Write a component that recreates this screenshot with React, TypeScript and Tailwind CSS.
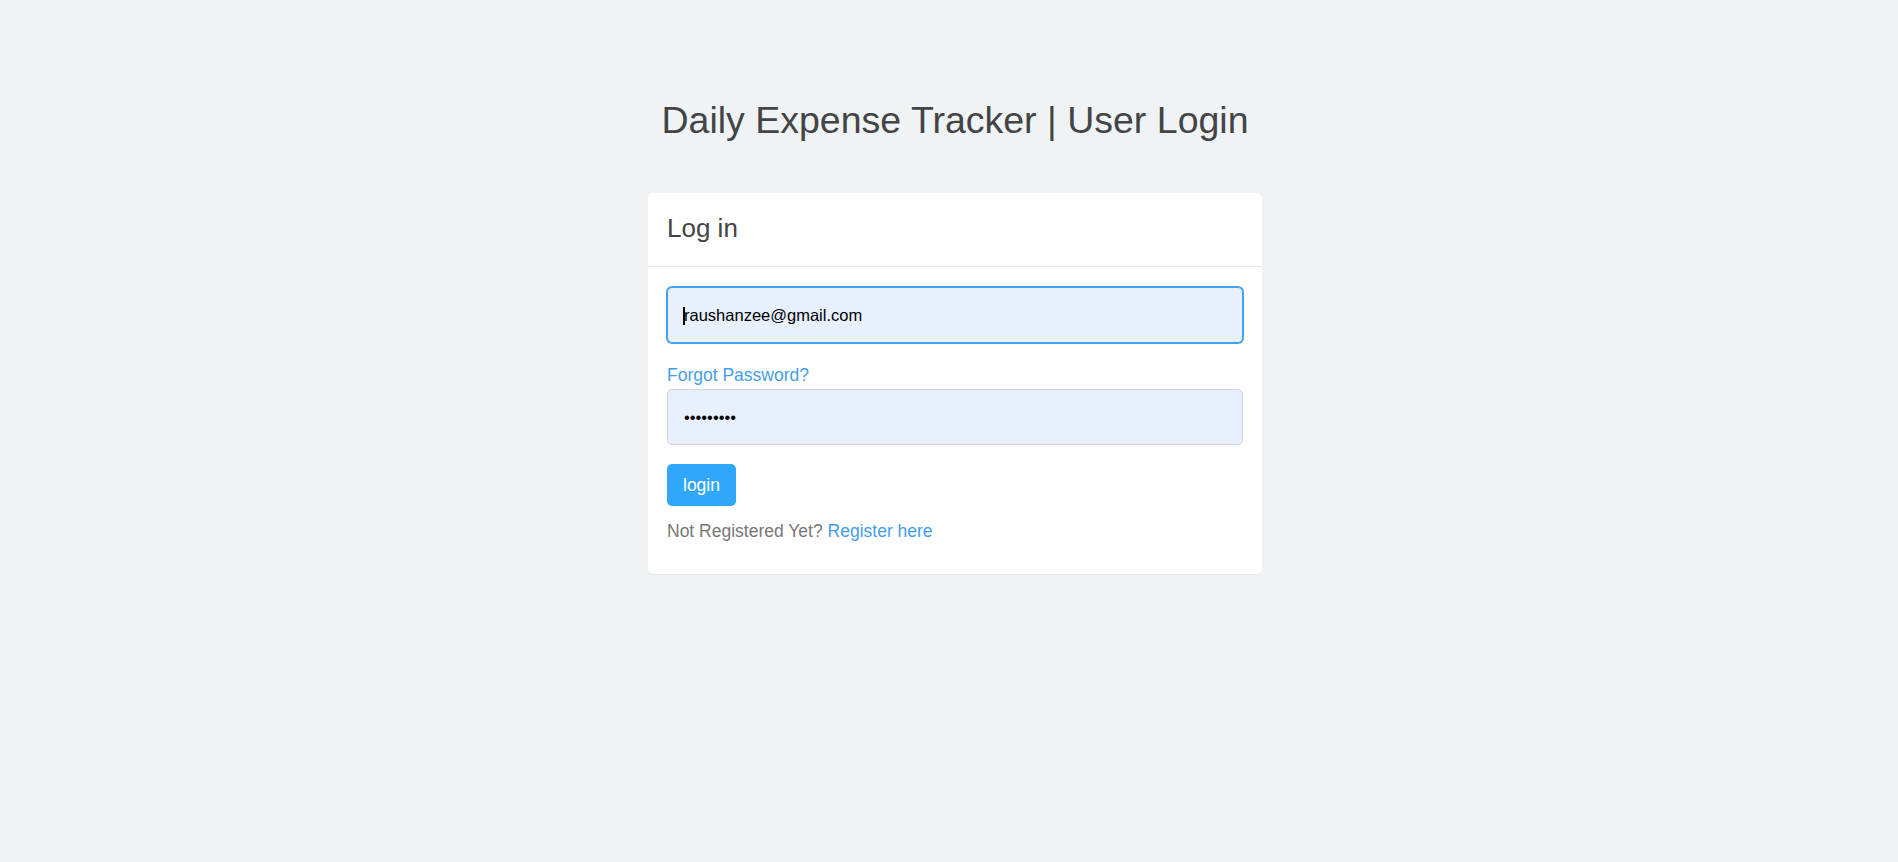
import { useState } from "react";

export default function App() {
	const [email, setEmail] = useState("raushanzee@gmail.com");
	const [password, setPassword] = useState("secret123");

	return (
		<div className="min-h-screen bg-[#eff3f6] pl-[12px] font-['Liberation_Sans',Arial,sans-serif]">
			<div className="mx-auto w-[614px] pt-[98px]">
				<h1 className="whitespace-nowrap text-center text-[37.5px] leading-[44px] text-[#444]">
					Daily Expense Tracker | User Login
				</h1>

				<div className="mt-[51px] rounded-[5px] bg-white shadow-[0_1px_1px_rgba(0,0,0,0.04)]">
					{/* Header */}
					<div className="flex h-[74px] items-center border-b border-[#e6e9ed] px-[19px] pb-[4px]">
						<h2 className="text-[26px] leading-[30px] text-[#444]">Log in</h2>
					</div>

					{/* Form Body */}
					<form
						className="px-[19px] pb-[30px] pt-[20px]"
						onSubmit={(e) => e.preventDefault()}>
						<div className="relative">
							<input
								type="email"
								value={email}
								onChange={(e) => setEmail(e.target.value)}
								className="block h-[56px] w-full rounded-[5px] border border-[#42a3f1] bg-[#e8f0fe] pl-[16px] text-[16.5px] text-black shadow-[0_0_0_1px_#42a3f1] outline-none"
							/>
							<span className="absolute left-[16px] top-[20px] h-[18px] w-[2px] bg-black" />
						</div>

						<a
							href="#"
							className="mt-[20px] block w-fit text-[17.5px] leading-[25px] text-[#449ee8]">
							Forgot Password?
						</a>
						<input
							type="password"
							value={password}
							onChange={(e) => setPassword(e.target.value)}
							className="mt-[1px] block h-[56px] w-full rounded-[5px] border border-[#cfd6e0] bg-[#e8f0fe] pl-[16px] text-[16.5px] text-black outline-none"
						/>

						<button
							type="submit"
							className="mt-[19px] h-[42px] rounded-[5px] bg-[#31a7fc] px-[16px] text-[17.5px] text-white">
							login
						</button>

						<p className="mt-[13px] text-[17.5px] leading-[25px] text-[#777]">
							Not Registered Yet?{" "}
							<a href="#" className="text-[#449ee8]">
								Register here
							</a>
						</p>
					</form>
				</div>
			</div>
		</div>
	);
}
